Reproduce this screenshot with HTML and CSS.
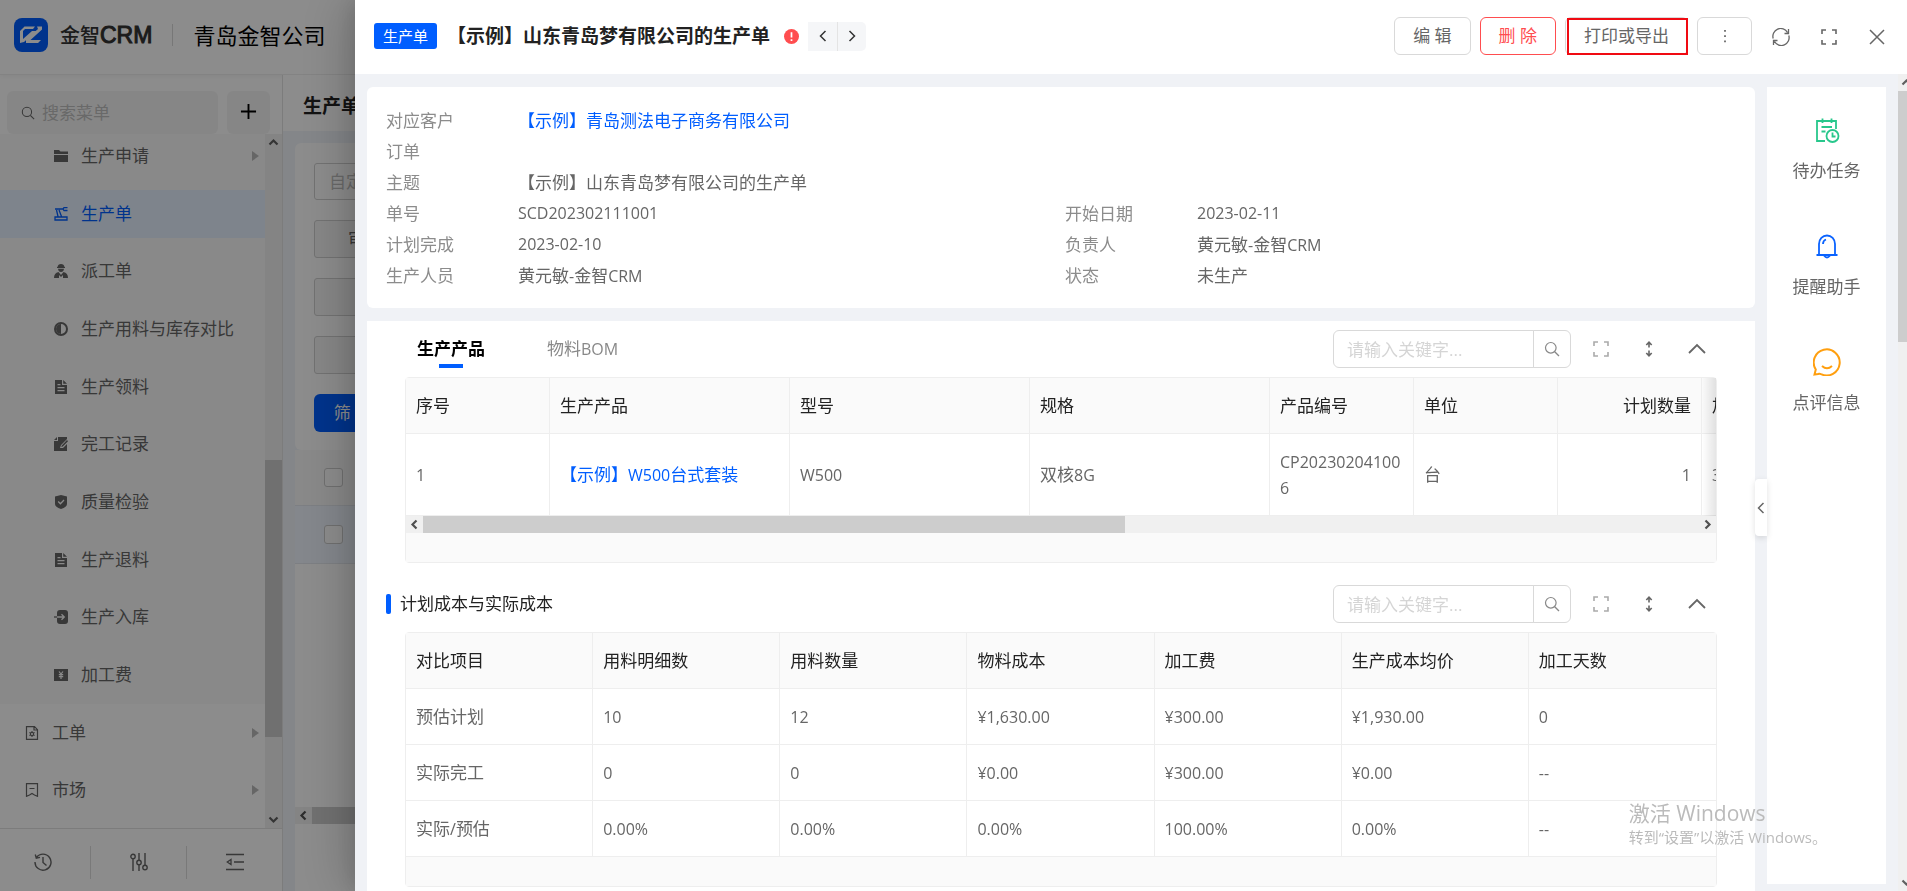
FILE: index.html
```
<!DOCTYPE html>
<html lang="zh-CN">
<head>
    <meta charset="UTF-8">
    <meta name="viewport" content="width=device-width, initial-scale=1.0">
    <title>金智CRM - 生产单</title>
    <link rel="stylesheet" href="styles.css">
</head>
<body>
    <!-- icons -->
    <svg class="sprite" aria-hidden="true">
        <symbol id="i-search" viewBox="0 0 16 16"><circle cx="6.8" cy="6.8" r="5.3" fill="none" stroke="currentColor" stroke-width="1.2"/><path d="M10.7 10.7l4.3 4.3" stroke="currentColor" stroke-width="1.3"/></symbol>
        <symbol id="i-expand" viewBox="0 0 16 16"><path d="M1 5V1h4M11 1h4v4M15 11v4h-4M5 15H1v-4" fill="none" stroke="currentColor" stroke-width="1.6"/></symbol>
        <symbol id="i-updown" viewBox="0 0 16 16"><path d="M8 1v5.6M8 9.4V15M5.3 4L8 1.2 10.7 4M5.3 12L8 14.8 10.7 12" fill="none" stroke="currentColor" stroke-width="1.6"/></symbol>
        <symbol id="i-up" viewBox="0 0 18 18"><path d="M1 13l8-8 8 8" fill="none" stroke="currentColor" stroke-width="1.8"/></symbol>
        <symbol id="i-left" viewBox="0 0 12 12"><path d="M8.5 1L3.5 6l5 5" fill="none" stroke="currentColor" stroke-width="1.5"/></symbol>
        <symbol id="i-right" viewBox="0 0 12 12"><path d="M3.5 1l5 5-5 5" fill="none" stroke="currentColor" stroke-width="1.5"/></symbol>
        <symbol id="s-up" viewBox="0 0 17 17"><path d="M4.5 10.5l4-4 4 4" fill="none" stroke="currentColor" stroke-width="2.2"/></symbol>
        <symbol id="s-down" viewBox="0 0 17 17"><path d="M4.5 6.5l4 4 4-4" fill="none" stroke="currentColor" stroke-width="2.2"/></symbol>
        <symbol id="s-left" viewBox="0 0 17 17"><path d="M10.5 4.5l-4 4 4 4" fill="none" stroke="currentColor" stroke-width="2.2"/></symbol>
        <symbol id="s-right" viewBox="0 0 17 17"><path d="M6.5 4.5l4 4-4 4" fill="none" stroke="currentColor" stroke-width="2.2"/></symbol>
        <symbol id="i-doc" viewBox="0 0 14 14"><path fill-rule="evenodd" fill="currentColor" d="M1 0h7v5h5v9H1zM9.2 0L13 3.8H9.2zM3.5 4v1.2h3V4zM3.5 7v1.2h7V7zM3.5 10v1.2h7V10z"/></symbol>
    </svg>

    <div class="page">
        <header class="topbar">
            <svg class="logo" viewBox="0 0 34 34"><rect width="34" height="34" rx="8" fill="#005eff"/><path d="M6 25V13l4.500-4.500H21L19 11h-8l-2 2v8l9-8h4L10 24zM23 8.500h5v3L16.500 22H27l-3 3H12v-3.500l12-10.500z" fill="#fff"/></svg>
            <span class="brand">金智<span class="brand-en">CRM</span></span>
            <span class="company">青岛金智公司</span>
        </header>
        <div class="workspace">
            <aside class="sidebar">
                <div class="menu-search">
                    <label class="menu-field">
                        <svg class="ic14"><use href="#i-search"/></svg>
                        <input type="text" placeholder="搜索菜单" aria-label="搜索菜单">
                    </label>
                    <button class="menu-add" aria-label="新增"><svg viewBox="0 0 18 18"><path d="M9 1v16M1 9h16" stroke="#000" stroke-width="2"/></svg></button>
                </div>
                <div class="menu-wrap">
                    <nav class="menu">
                        <div class="submenu">
                            <a href="#" class="item"><svg viewBox="0 0 14 14"><path fill="currentColor" d="M0 1h5l1.500 1.500H14V5H0zM0 6h14v7H0z"/></svg>生产申请<i class="caret"></i></a>
                            <a href="#" class="item active"><svg viewBox="0 0 14 14"><path fill="none" stroke="currentColor" stroke-width="1.300" d="M1 10h12v3H1zM4 9.500L2.500 3M7.500 9.500L5 3M1 2h8l1-1.300h3.500M9 2l1 1.500h3.500"/></svg>生产单</a>
                            <a href="#" class="item"><svg viewBox="0 0 14 14"><path fill="currentColor" d="M3.500 3Q4 0 7 0t3.500 3h.5v1H3V3zM4 4.700h6Q9.500 8 7 8T4 4.700zM0 14q0-5 4.500-6L7 11l2.500-3Q14 9 14 14H9v-3L7 13l-2-2v3z"/></svg>派工单</a>
                            <a href="#" class="item"><svg viewBox="0 0 14 14"><circle cx="7" cy="7" r="6" fill="none" stroke="currentColor" stroke-width="2"/><path fill="currentColor" d="M7 2a5 5 0 0 0 0 10z"/></svg>生产用料与库存对比</a>
                            <a href="#" class="item"><svg><use href="#i-doc"/></svg>生产领料</a>
                            <a href="#" class="item"><svg viewBox="0 0 14 14"><path fill="currentColor" d="M4 0h9v2L7 8l-1 3h3l4-4v7H0V4h4zM0 3l3-3v3zM13 3l1 1.200L8.800 9.500l-1.500.5.500-1.600z"/></svg>完工记录</a>
                            <a href="#" class="item"><svg viewBox="0 0 14 14"><path fill="currentColor" d="M7 0l6 1.500V9q0 3-6 5-6-2-6-5V1.500z"/><path d="M4.200 6.500l2.200 2.200L10 5" fill="none" stroke="#fafafa" stroke-width="1.300"/></svg>质量检验</a>
                            <a href="#" class="item"><svg><use href="#i-doc"/></svg>生产退料</a>
                            <a href="#" class="item"><svg viewBox="0 0 14 14"><rect x="3" width="11" height="14" rx="3" fill="currentColor"/><path d="M3 7h7M7.500 4.200L10.300 7l-2.800 2.800" fill="none" stroke="#fafafa" stroke-width="1.300"/><path d="M0 7h3" stroke="currentColor" stroke-width="1.300"/></svg>生产入库</a>
                            <a href="#" class="item"><svg viewBox="0 0 14 14"><path fill="currentColor" d="M0 1h14v12H0z"/><path d="M5 3.500L7 6l2-2.500M7 6v5M4.800 6.600h4.400M4.800 8.600h4.400" fill="none" stroke="#fafafa" stroke-width="1.200"/></svg>加工费</a>
                        </div>
                        <a href="#" class="item top"><svg viewBox="0 0 14 14"><path d="M1.500.700h8l3 3v9.600h-11zM9 .700V4h3.500" fill="none" stroke="currentColor" stroke-width="1.200"/><circle cx="7" cy="8" r="1.700" fill="none" stroke="currentColor" stroke-width="1.200"/><path d="M7 5v1M7 10v1M4.400 6.500l.9.500M8.700 9l.9.500M4.400 9.500l.9-.5M8.700 7l.9-.5" stroke="currentColor"/></svg>工单<i class="caret"></i></a>
                        <a href="#" class="item top"><svg viewBox="0 0 14 14"><path d="M1.500.700h11v12.600L9.500 12 7 10.500 4.500 12l-3 1.300zM4.500 5.500h5" fill="none" stroke="currentColor" stroke-width="1.200"/></svg>市场<i class="caret"></i></a>
                    </nav>
                    <div class="vbar menu-bar"><svg><use href="#s-up"/></svg><span class="track"><span class="thumb"></span></span><svg><use href="#s-down"/></svg></div>
                </div>
                <div class="side-foot">
                    <button aria-label="历史"><svg viewBox="0 0 18 18"><path d="M2.500 4.500A8 8 0 1 1 1 9M1.300 1.500l1 3.700 3.700-.8M9 4v5.500l3.500 3" fill="none" stroke="currentColor" stroke-width="1.400"/></svg></button>
                    <button aria-label="设置"><svg viewBox="0 0 18 18"><g fill="none" stroke="currentColor" stroke-width="1.400"><circle cx="3" cy="3.500" r="2.200"/><circle cx="9" cy="9.500" r="2.200"/><circle cx="15" cy="14.500" r="2.200"/><path d="M3 6v12M9 0v7M9 12v6M15 0v12"/></g></svg></button>
                    <button aria-label="收起"><svg viewBox="0 0 18 18"><path d="M0 1.500h18M8 9h10M0 16.500h18" stroke="currentColor" stroke-width="1.500"/><path d="M5 6.500v5L1.300 9z" fill="none" stroke="currentColor" stroke-width="1.300"/></svg></button>
                </div>
            </aside>
            <main class="list">
                <h2 class="list-title">生产单</h2>
                <div class="list-body">
                    <form class="filters">
                        <input type="text" placeholder="自定义" aria-label="自定义">
                        <button type="button" class="pick">审批</button>
                        <button type="button" class="pick" aria-label="筛选条件"></button>
                        <button type="button" class="pick" aria-label="筛选条件"></button>
                        <button type="button" class="go">筛 选</button>
                    </form>
                    <div class="list-row head"><input type="checkbox" aria-label="全选"></div>
                    <div class="list-row picked"><input type="checkbox" aria-label="选择"></div>
                    <div class="list-space"></div>
                    <div class="hbar"><svg><use href="#s-left"/></svg><span class="thumb"></span></div>
                    <div class="list-end"></div>
                </div>
            </main>
        </div>
    </div>

    <div class="mask"></div>

    <section class="drawer">
        <header class="drawer-head">
            <span class="tag">生产单</span>
            <h1>【示例】山东青岛梦有限公司的生产单</h1>
            <svg class="alert" viewBox="0 0 14 14"><circle cx="7" cy="7" r="7" fill="#ff4d4f"/><path d="M7 3v5M7 9.500v1.800" stroke="#fff" stroke-width="1.600"/></svg>
            <div class="pager">
                <button aria-label="上一条"><svg class="ic12"><use href="#i-left"/></svg></button>
                <button aria-label="下一条"><svg class="ic12"><use href="#i-right"/></svg></button>
            </div>
            <div class="actions">
                <button class="btn">编 辑</button>
                <button class="btn danger">删 除</button>
                <button class="btn marked">打印或导出</button>
                <button class="btn more" aria-label="更多"><svg viewBox="0 0 4 16"><path d="M1 1h2v2H1zM1 7h2v2H1zM1 13h2v2H1z" fill="currentColor"/></svg></button>
            </div>
            <div class="tools">
                <button aria-label="刷新"><svg viewBox="0 0 18 18"><path d="M1.200 10.500A7.800 7.800 0 0 1 15.500 4.500M16.800 7.500A7.800 7.800 0 0 1 2.500 13.500M16.500 1v4.500h-4M1.500 17v-4.500h4" fill="none" stroke="currentColor" stroke-width="1.300"/></svg></button>
                <button aria-label="全屏"><svg class="ic16"><use href="#i-expand"/></svg></button>
                <button aria-label="关闭"><svg class="ic16" viewBox="0 0 16 16"><path d="M1 1l14 14M15 1L1 15" stroke="currentColor" stroke-width="1.500"/></svg></button>
            </div>
        </header>

        <div class="drawer-body">
            <div class="detail">
                <dl class="card info">
                    <div class="full"><dt>对应客户</dt><dd><a href="#">【示例】青岛测法电子商务有限公司</a></dd></div>
                    <div class="full"><dt>订单</dt><dd></dd></div>
                    <div class="full"><dt>主题</dt><dd>【示例】山东青岛梦有限公司的生产单</dd></div>
                    <div><dt>单号</dt><dd class="num">SCD202302111001</dd></div>
                    <div><dt>开始日期</dt><dd class="num">2023-02-11</dd></div>
                    <div><dt>计划完成</dt><dd class="num">2023-02-10</dd></div>
                    <div><dt>负责人</dt><dd>黄元敏<span class="num">-</span>金智<span class="num">CRM</span></dd></div>
                    <div><dt>生产人员</dt><dd>黄元敏<span class="num">-</span>金智<span class="num">CRM</span></dd></div>
                    <div><dt>状态</dt><dd>未生产</dd></div>
                </dl>

                <div class="panels">
                    <section>
                        <div class="panel-head">
                            <div class="tabs">
                                <button class="tab on">生产产品</button>
                                <button class="tab">物料<span class="num">BOM</span></button>
                            </div>
                            <div class="search"><input type="text" placeholder="请输入关键字..." aria-label="关键字"><button aria-label="搜索"><svg class="ic16"><use href="#i-search"/></svg></button></div>
                            <button class="ico light" aria-label="全屏"><svg class="ic16"><use href="#i-expand"/></svg></button>
                            <button class="ico" aria-label="行高"><svg class="ic16"><use href="#i-updown"/></svg></button>
                            <button class="ico" aria-label="收起"><svg class="ic18"><use href="#i-up"/></svg></button>
                        </div>
                        <div class="grid">
                            <div class="grid-view">
                                <table class="wide">
                                    <colgroup><col class="c-s"><col class="c-l"><col class="c-l"><col class="c-l"><col class="c-s"><col class="c-s"><col class="c-s"><col class="c-s"></colgroup>
                                    <thead><tr><th>序号</th><th>生产产品</th><th>型号</th><th>规格</th><th>产品编号</th><th>单位</th><th class="right">计划数量</th><th>加工费</th></tr></thead>
                                    <tbody><tr><td class="num">1</td><td><a href="#">【示例】<span class="num">W500</span>台式套装</a></td><td class="num">W500</td><td>双核<span class="num">8G</span></td><td class="num code">CP202302041006</td><td>台</td><td class="num right">1</td><td class="num">300</td></tr></tbody>
                                </table>
                            </div>
                            <div class="hbar"><svg><use href="#s-left"/></svg><span class="track"><span class="thumb"></span></span><svg><use href="#s-right"/></svg></div>
                            <div class="grid-foot"></div>
                        </div>
                    </section>

                    <section>
                        <div class="panel-head">
                            <h3>计划成本与实际成本</h3>
                            <div class="search"><input type="text" placeholder="请输入关键字..." aria-label="关键字"><button aria-label="搜索"><svg class="ic16"><use href="#i-search"/></svg></button></div>
                            <button class="ico light" aria-label="全屏"><svg class="ic16"><use href="#i-expand"/></svg></button>
                            <button class="ico" aria-label="行高"><svg class="ic16"><use href="#i-updown"/></svg></button>
                            <button class="ico" aria-label="收起"><svg class="ic18"><use href="#i-up"/></svg></button>
                        </div>
                        <div class="grid">
                            <table>
                                <thead><tr><th>对比项目</th><th>用料明细数</th><th>用料数量</th><th>物料成本</th><th>加工费</th><th>生产成本均价</th><th>加工天数</th></tr></thead>
                                <tbody>
                                    <tr><td>预估计划</td><td class="num">10</td><td class="num">12</td><td class="num">¥1,630.00</td><td class="num">¥300.00</td><td class="num">¥1,930.00</td><td class="num">0</td></tr>
                                    <tr><td>实际完工</td><td class="num">0</td><td class="num">0</td><td class="num">¥0.00</td><td class="num">¥300.00</td><td class="num">¥0.00</td><td class="num">--</td></tr>
                                    <tr><td>实际<span class="num">/</span>预估</td><td class="num">0.00%</td><td class="num">0.00%</td><td class="num">0.00%</td><td class="num">100.00%</td><td class="num">0.00%</td><td class="num">--</td></tr>
                                </tbody>
                            </table>
                            <div class="grid-foot"></div>
                        </div>
                    </section>
                </div>
            </div>

            <aside class="helper">
                <button class="fold" aria-label="展开"><svg class="ic12"><use href="#i-left"/></svg></button>
                <a href="#"><svg viewBox="0 0 28 28" fill="none" stroke="#28c78c" stroke-width="1.800"><path d="M12 25H4V5h19v8M9.500 2.500V7M18.500 2.500V7M8.500 11h10.500M8.500 15.500h4"/><circle cx="19.500" cy="20" r="6"/><path d="M19.500 16.500v4h3"/></svg>待办任务</a>
                <a href="#"><svg viewBox="0 0 28 28" fill="none" stroke="#0a63ff" stroke-width="1.800"><path d="M3.500 23h21M6 23V12a8 8.500 0 0 1 16 0v11M11 23.500q3 4 6 0M10 12q0-3.500 3-4.500"/></svg>提醒助手</a>
                <a href="#"><svg viewBox="0 0 28 28" fill="none" stroke="#ff9f0f" stroke-width="2"><path d="M1.500 26.500l1.300-5A13 13 0 1 1 8 26.100q-1.500-.8-3-.1zM9 18q5 4.500 10 0"/></svg>点评信息</a>
            </aside>

            <div class="vbar body-bar"><svg><use href="#s-up"/></svg><span class="track"><span class="thumb"></span></span><svg><use href="#s-down"/></svg></div>
        </div>
    </section>

    <div class="watermark"><p class="wm-big">激活 Windows</p><p>转到“设置”以激活 Windows。</p></div>
</body>
</html>
```
FILE: styles.css
```
* { box-sizing: border-box; margin: 0; padding: 0; }
body { height: 100vh; overflow: hidden; font-family: "Open Sans", "Noto Sans CJK SC", sans-serif; font-size: 17px; line-height: 26px; color: #666; }
button, input { font: inherit; color: inherit; }
button { border: none; background: none; cursor: pointer; }
a { color: #005eff; text-decoration: none; }
svg { display: block; flex: none; }
::placeholder { color: #bfbfbf; opacity: 1; }
.sprite { position: absolute; width: 0; height: 0; }
.num { font-size: 16px; }
.ic12 { width: 12px; height: 12px; }
.ic14 { width: 14px; height: 14px; }
.ic16 { width: 16px; height: 16px; }
.ic18 { width: 18px; height: 18px; }

/* list page under the mask */
.page { height: 100vh; display: flex; flex-direction: column; background: #fff; }
.topbar { height: 75px; flex: none; display: flex; align-items: center; padding: 0 14px 4px; border-bottom: 1px solid #eee; box-shadow: 0 1px 4px rgba(0,0,0,0.05); }
.logo { width: 34px; height: 34px; }
.brand { margin-left: 12px; color: #333; font-size: 20px; font-weight: 500; }
.brand-en { font-family: "Liberation Sans", sans-serif; font-size: 23px; -webkit-text-stroke: 1px #333; }
.company { margin-left: 20px; padding-left: 20px; border-left: 1px solid #d9d9d9; font-size: 22px; line-height: 22px; color: #000; }
.workspace { flex: 1; min-height: 0; display: flex; }
.sidebar { width: 283px; flex: none; display: flex; flex-direction: column; border-right: 1px solid #e2e2e2; }
.menu-search { display: flex; gap: 9px; padding: 16px 12px 0 7px; }
.menu-field { flex: 1; min-width: 0; height: 43px; display: flex; align-items: center; gap: 7px; padding: 0 14px; border-radius: 6px; background: #f5f5f5; }
.menu-field input { flex: 1; min-width: 0; border: none; background: none; }
.menu-add { width: 43px; height: 43px; padding-bottom: 2px; border-radius: 6px; background: #f5f5f5; display: flex; align-items: center; justify-content: center; }
.menu-add svg { width: 17px; height: 17px; }
.menu-wrap { flex: 1; min-height: 0; display: flex; overflow: hidden; }
.menu { flex: 1; display: flex; flex-direction: column; margin: -7px 0 9px; }
.submenu { flex: 10; display: flex; flex-direction: column; background: #fafafa; }
.item { flex: 1; display: flex; align-items: center; padding: 0 6px 0 54px; color: #666; }
.item svg { width: 14px; height: 14px; margin-right: 13px; }
.item.top { padding-left: 25px; }
.item.active { color: #005eff; background: linear-gradient(#e6f1ff, #e6f1ff) center / 100% 48px no-repeat; }
.caret { margin-left: auto; border: 5px solid transparent; border-left: 7px solid #bbb; border-right: none; }
.vbar { width: 17px; flex: none; display: flex; flex-direction: column; background: #f0f0f0; color: #606060; }
.vbar svg, .hbar svg { width: 17px; height: 17px; }
.track { flex: 1; display: flex; flex-direction: column; }
.thumb { background: #cdcdcd; }
.menu-bar .thumb { height: 42%; margin-top: 309px; }
.side-foot { height: 63px; flex: none; display: flex; align-items: center; padding-top: 4px; border-top: 1px solid #e2e2e2; }
.side-foot button { width: 34%; height: 33px; display: flex; align-items: center; justify-content: center; border-left: 1px solid #ddd; }
.side-foot button:first-child { flex: 1; padding-right: 4px; border-left: none; }
.side-foot svg { width: 18px; height: 18px; }
.list { flex: 1; display: flex; flex-direction: column; background: #f0f4fa; }
.list-title { height: 56px; padding: 18px 20px; background: #fff; font-size: 19px; color: #222; }
.list-body { flex: 1; display: flex; flex-direction: column; margin: 12px 12px 0; }
.filters { display: grid; gap: 20px; justify-items: start; padding: 20px 19px 18px; border-radius: 6px; background: #fff; }
.filters input, .pick, .go { width: 240px; height: 38px; padding: 0 14px; border: 1px solid #d0d0d0; border-radius: 3px; }
.filters input { height: 37px; }
.filters .pick { padding-left: 33px; background: #f5f5f5; text-align: left; }
.filters .go { width: 78px; padding: 0 18px; border: none; border-radius: 6px; background: #005eff; color: #fff; }
.list-row { height: 58px; display: flex; align-items: center; padding-left: 29px; background: #f0f6ff; border-bottom: 1px solid #e4e8ee; }
.list-row.head { height: 56px; background: #fafafa; }
.list-row input { appearance: none; width: 19px; height: 19px; border: 1px solid #ccc; border-radius: 3px; background: #fff; }
.list-space { flex: 1; background: #fff; }
.hbar { height: 17px; display: flex; background: #f0f0f0; color: #505050; }
.list .hbar .thumb { flex: 1; }
.list-end { height: 67px; background: #fff; }
.mask { position: fixed; inset: 0; background: rgba(0,0,0,0.45); }

/* drawer */
.drawer { position: fixed; top: 0; right: 0; bottom: 0; left: 355px; display: flex; flex-direction: column; background: #f0f2f6; box-shadow: -6px 0 16px rgba(0,0,0,0.08), -9px 0 48px rgba(0,0,0,0.2); }
.drawer-head { height: 74px; flex: none; display: flex; align-items: center; padding: 0 6px 2px 19px; background: #fff; }
.tag { padding: 0 9px; border-radius: 3px; background: #005eff; color: #fff; font-size: 15px; }
.drawer-head h1 { margin-left: 10px; font-size: 19px; color: #222; }
.alert { width: 15px; height: 15px; margin: 0 9px 0 14px; }
.pager { display: flex; background: #f5f6f8; border-radius: 0 5px 5px 0; }
.pager button { width: 29px; height: 29px; display: flex; align-items: center; justify-content: center; color: #333; }
.pager button + button { border-left: 1px solid #e4e4e4; }
.actions { display: flex; gap: 9px; margin-left: auto; margin-right: 5px; }
.btn { height: 38px; padding: 0 18px; border: 1px solid #d9d9d9; border-radius: 6px; background: #fff; line-height: 36px; }
.btn.danger { border-color: #ff4d4f; color: #ff4d4f; }
.btn.marked { position: relative; }
.btn.marked::after { content: ""; position: absolute; inset: 0 -1px -1px 1px; border: 2px solid #f00a12; }
.btn.more { width: 55px; display: flex; align-items: center; justify-content: center; }
.more svg { width: 4px; height: 14px; }
.tools { display: flex; padding-top: 2px; }
.tools button { width: 48px; height: 38px; display: flex; align-items: center; justify-content: center; }
.tools svg { width: 18px; height: 18px; }
.tools .ic16 { width: 16px; height: 16px; }

.drawer-body { flex: 1; min-height: 0; display: flex; overflow: hidden; }
.detail { flex: 1; min-width: 0; padding: 13px 12px 0; }
.info { display: grid; grid-template-columns: 1fr 1fr; padding: 18px 11px 17px 19px; border-radius: 6px; background: #fff; line-height: 31px; }
.info div { display: flex; }
.info .full { grid-column: 1 / 3; }
.info dt { width: 132px; color: #8c8c8c; }
.info dd { height: 31px; }
.panels { height: 100%; margin-top: 13px; padding: 0 38px; background: #fff; }
.panel-head { height: 56px; display: flex; align-items: center; }
.tabs { display: flex; gap: 38px; }
.tab { padding: 0 12px; color: #888; }
.tab.on { position: relative; color: #000; font-weight: 700; }
.tab.on::after { content: ""; position: absolute; left: 50%; bottom: -6px; width: 24px; height: 4px; margin-left: -12px; background: #005eff; }
.panel-head h3 { display: flex; align-items: center; gap: 9px; margin-left: -19px; font-size: 17px; font-weight: 400; color: #222; }
.panel-head h3::before { content: ""; width: 5px; height: 20px; border-radius: 2px; background: #005eff; }
.search { display: flex; margin-left: auto; margin-right: 6px; }
.search input { width: 201px; height: 38px; padding: 0 13px; border: 1px solid #d9d9d9; border-radius: 6px 0 0 6px; }
.search button { width: 38px; height: 38px; margin-left: -1px; display: flex; align-items: center; justify-content: center; border: 1px solid #d9d9d9; border-radius: 0 6px 6px 0; color: #888; }
.search ::placeholder { color: #d5d5d5; }
.ico { width: 48px; height: 38px; display: flex; align-items: center; justify-content: center; }
.ico.light { color: #aaa; }
.panels .ico:last-child { margin-right: -4px; }

.grid { margin-bottom: 13px; border: 1px solid #eee; border-radius: 4px; }
.grid-view { position: relative; overflow: hidden; }
.grid-view::after { content: ""; position: absolute; top: 0; right: 0; bottom: 0; width: 14px; background: linear-gradient(to right, rgba(0,0,0,0), rgba(0,0,0,0.1)); }
table { width: 100%; table-layout: fixed; border-collapse: separate; border-spacing: 0; }
table.wide { width: 1440px; }
.c-s { width: 144px; }
.c-l { width: 240px; }
th, td { padding: 15px 10px 14px; border-right: 1px solid #eee; border-bottom: 1px solid #eee; text-align: left; font-weight: 400; }
th { background: #fafafa; color: #222; }
table:not(.wide) tr > :last-child { border-right: none; }
.wide .right { text-align: right; }
.code { word-break: break-all; }
.grid .hbar .track { flex-direction: row; }
.grid .hbar .thumb { width: 55%; }
.grid-foot { height: 29px; background: #fafafa; }

.helper { position: relative; width: 119px; flex: none; margin: 13px 12px 7px 0; padding-top: 29px; background: #fff; }
.helper a { height: 116px; display: flex; flex-direction: column; align-items: center; gap: 14px; color: #666; }
.helper svg { width: 28px; height: 28px; }
.fold { position: absolute; left: -12px; top: 392px; width: 12px; height: 57px; border-radius: 4px 0 0 4px; background: #fff; box-shadow: 0 2px 6px rgba(0,0,0,0.12); }
.helper .fold svg { width: 12px; height: 12px; }
.body-bar { margin-right: -8px; }
.body-bar .thumb { height: 32%; }

.watermark { position: fixed; right: 80px; bottom: 42px; font-size: 15px; line-height: 24px; color: #bbb; pointer-events: none; }
.wm-big { font-size: 21px; }
```
